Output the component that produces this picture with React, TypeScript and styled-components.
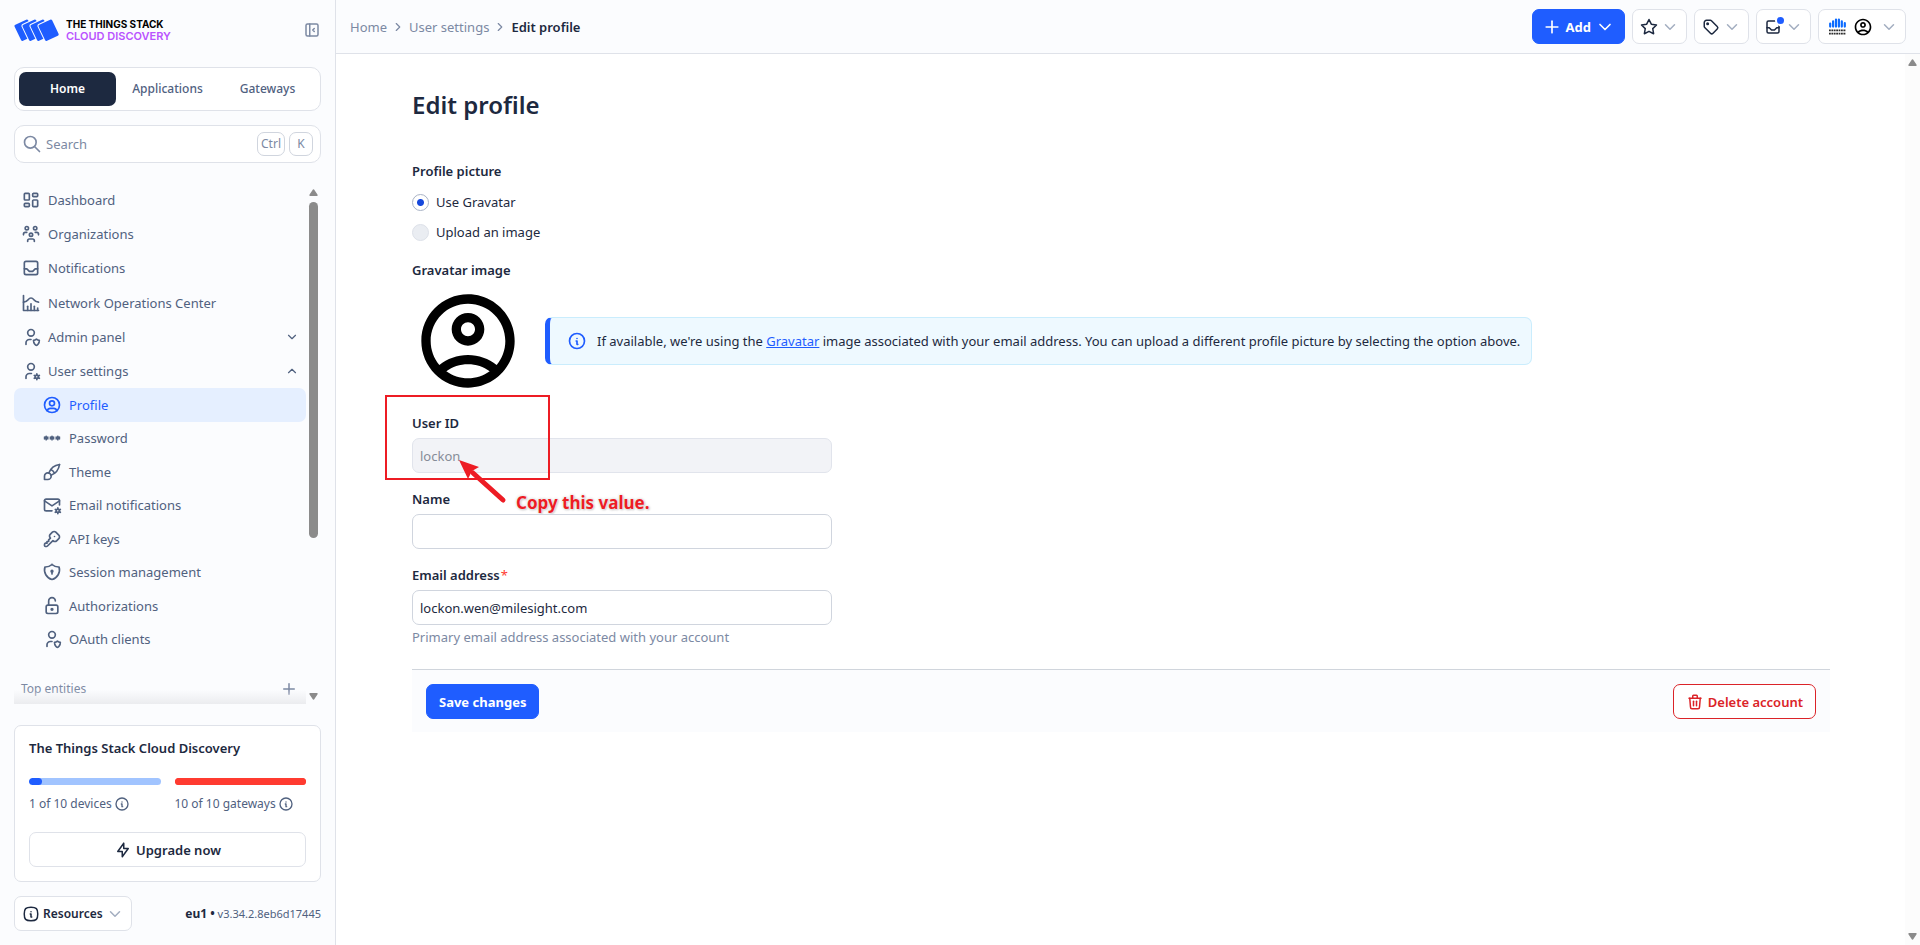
import React from 'react';
import styled, { createGlobalStyle, css } from 'styled-components';
import {
  TbBolt, TbBrush, TbChartHistogram, TbChevronDown, TbChevronRight, TbChevronUp, TbInbox,
  TbInfoCircle, TbInfoSquareRounded, TbKey, TbLayoutDashboard, TbLayoutSidebarLeftCollapse,
  TbLockOpen, TbMailCog, TbPassword, TbPlus, TbSearch, TbShieldLock, TbStar, TbTag, TbTrash,
  TbUserCircle, TbUserCog, TbUserShield, TbUsersGroup,
} from 'react-icons/tb';

const color = {
  text: '#1d2940',
  muted: '#50617f',
  light: '#7c89a3',
  faint: '#a3aec0',
  border: '#dfe2e9',
  field: '#d0d5de',
  surface: '#fbfcfe',
  blue: '#1f5dff',
  red: '#db2328',
  mark: '#ed1c24',
};

const GlobalStyle = createGlobalStyle`
  *, *::before, *::after { box-sizing: border-box; }
  body {
    margin: 0;
    background: #fff;
    color: ${color.text};
    font: 400 13px/20px "Noto Sans", "Open Sans", sans-serif;
  }
  button, input { font: inherit; color: inherit; margin: 0; }
  button { cursor: pointer; }
  a { color: inherit; text-decoration: none; }
  svg { display: block; flex: none; }
`;

const Shell = styled.div`
  display: flex;
  height: 100vh;
  min-height: 900px;
`;

/* ---------- Sidebar ---------- */

const Sidebar = styled.aside`
  display: flex;
  flex-direction: column;
  flex: none;
  width: 336px;
  padding: 14px;
  background: ${color.surface};
  border-right: 1px solid ${color.border};
`;

const BrandRow = styled.div`
  display: flex;
  align-items: center;
  justify-content: space-between;
  height: 32px;
  margin-bottom: 21px;
`;

const Brand = styled.a`
  display: flex;
  align-items: center;
  gap: 6px;
`;

const BrandText = styled.span`
  display: flex;
  flex-direction: column;
  font: 700 10px/12px Inter, sans-serif;
  color: #000;
`;

const BrandPlan = styled.span`
  font-size: 11px;
  font-weight: 600;
  color: #b953ff;
`;

const IconButton = styled.button`
  display: flex;
  padding: 0;
  border: 0;
  background: none;
  color: ${color.light};
`;

const Switcher = styled.nav`
  display: grid;
  grid-template-columns: repeat(3, 1fr);
  gap: 3px;
  height: 44px;
  padding: 4px;
  margin-bottom: 14px;
  background: #fff;
  border: 1px solid ${color.border};
  border-radius: 10px;
`;

const SwitcherTab = styled.a<{ $active?: boolean }>`
  display: flex;
  align-items: center;
  justify-content: center;
  border-radius: 7px;
  font-size: 12px;
  font-weight: ${(p) => (p.$active ? 600 : 500)};
  color: ${(p) => (p.$active ? '#fff' : color.muted)};
  background: ${(p) => (p.$active ? color.text : 'transparent')};
`;

const SearchButton = styled.button`
  display: flex;
  align-items: center;
  gap: 4px;
  height: 38px;
  padding: 0 7px;
  margin-bottom: 20px;
  background: #fff;
  border: 1px solid ${color.border};
  border-radius: 10px;
  color: ${color.light};
`;

const SearchLabel = styled.span`
  flex: 1;
  text-align: left;
`;

const Key = styled.kbd`
  display: flex;
  align-items: center;
  justify-content: center;
  min-width: 24px;
  height: 24px;
  padding: 0 3px;
  border: 1px solid ${color.field};
  border-radius: 7px;
  font: inherit;
  font-size: 12px;
`;

const NavScroll = styled.div`
  display: flex;
  flex: 1;
  min-height: 0;
  margin-bottom: 21px;
`;

const NavPane = styled.div`
  position: relative;
  flex: 1;
  overflow: hidden;
  &::after {
    content: '';
    position: absolute;
    inset: auto 0 0;
    height: 14px;
    background: linear-gradient(rgba(235, 236, 239, 0), #ebecef);
  }
`;

const NavList = styled.div<{ $height: number }>`
  display: grid;
  grid-auto-rows: 1fr;
  min-height: ${(p) => p.$height}px;
`;

const navItem = css`
  display: flex;
  align-items: center;
  gap: 7px;
  border: 0;
  border-radius: 7px;
  text-align: left;
`;

const NavLink = styled.a<{ $active?: boolean; $nested?: boolean }>`
  ${navItem}
  padding: 0 7px 0 ${(p) => (p.$nested ? 28 : 7)}px;
  color: ${(p) => (p.$active ? color.blue : color.muted)};
  background: ${(p) => (p.$active ? '#e5efff' : 'transparent')};
`;

const NavToggle = styled.button`
  ${navItem}
  padding: 0 7px;
  background: none;
  color: ${color.muted};
`;

const Grow = styled.span`
  flex: 1;
`;

const EntitiesHead = styled.div`
  display: flex;
  align-items: center;
  justify-content: space-between;
  padding: 0 8px 0 7px;
  margin-top: 23px;
  font-size: 12px;
  color: ${color.light};
`;

const NavTrack = styled.div`
  display: flex;
  flex-direction: column;
  align-items: center;
  justify-content: space-between;
  width: 15px;
  padding: 6px 0 4px;
`;

const NavThumb = styled.div`
  flex: 1;
  width: 9px;
  max-height: 336px;
  margin: 6px 0 auto;
  border-radius: 5px;
  background: #8b8b8b;
`;

const Card = styled.section`
  padding: 14px;
  margin-bottom: 14px;
  background: #fff;
  border: 1px solid ${color.border};
  border-radius: 7px;
`;

const CardTitle = styled.h2`
  margin: 0 0 21px;
  font-size: 13px;
  line-height: 17px;
  font-weight: 600;
`;

const Quotas = styled.div`
  display: grid;
  grid-template-columns: 1fr 1fr;
  gap: 14px;
  margin-bottom: 18px;
`;

const QuotaBar = styled.div<{ $full?: boolean }>`
  height: 7px;
  margin-bottom: 9px;
  border-radius: 4px;
  overflow: hidden;
  background: ${(p) => (p.$full ? '#ff3b30' : '#a1c4ff')};
`;

const QuotaFill = styled.div<{ $full?: boolean }>`
  height: 100%;
  border-radius: 4px;
  background: ${(p) => (p.$full ? '#ff3b30' : color.blue)};
`;

const QuotaLabel = styled.div`
  display: flex;
  align-items: center;
  gap: 2px;
  font-size: 12px;
  color: ${color.muted};
`;

const Footer = styled.footer`
  display: flex;
  align-items: center;
  justify-content: space-between;
  font-size: 12px;
  color: ${color.muted};
`;

const Version = styled.span`
  font-size: 11px;
`;

const Strong = styled.strong`
  font-size: 12px;
  color: ${color.text};
`;

/* ---------- Shared buttons ---------- */

const Button = styled.button<{ $kind?: 'primary' | 'danger'; $wide?: boolean }>`
  display: flex;
  align-items: center;
  justify-content: center;
  gap: 4px;
  height: 35px;
  width: ${(p) => (p.$wide ? '100%' : 'auto')};
  padding: 0 12px;
  border-radius: 7px;
  border: 1px solid ${(p) => (p.$kind === 'primary' ? color.blue : p.$kind === 'danger' ? color.red : color.border)};
  background: ${(p) => (p.$kind === 'primary' ? color.blue : '#fff')};
  color: ${(p) => (p.$kind === 'primary' ? '#fff' : p.$kind === 'danger' ? color.red : color.text)};
  font-weight: 600;
`;

const SaveButton = styled(Button)`
  font-weight: 700;
`;

const AddButton = styled(Button)`
  padding: 0 9px;
  font-weight: 700;
`;

const ResourcesButton = styled(Button)`
  gap: 3px;
  padding: 0 7px;
  font-size: 12px;
`;

const Chevron = styled(TbChevronDown)`
  color: ${color.faint};
`;

/* ---------- Main column ---------- */

const Column = styled.div`
  display: flex;
  flex-direction: column;
  flex: 1;
  min-width: 0;
`;

const TopBar = styled.header`
  display: flex;
  align-items: center;
  justify-content: space-between;
  height: 54px;
  padding: 0 14px;
  background: ${color.surface};
  border-bottom: 1px solid ${color.border};
`;

const Crumbs = styled.nav`
  display: flex;
  align-items: center;
  gap: 4px;
  color: ${color.light};
`;

const CurrentCrumb = styled.span`
  font-weight: 600;
  color: ${color.text};
`;

const Actions = styled.div`
  display: flex;
  gap: 7px;
`;

const MenuButton = styled(Button)`
  gap: 3px;
  padding: 0 7px;
`;

const UserButton = styled(MenuButton)`
  gap: 7px;
  padding: 0 7px 0 10px;
`;

const InboxBadge = styled.span`
  position: relative;
  &::after {
    content: '';
    position: absolute;
    top: -1px;
    right: -2px;
    width: 7px;
    height: 7px;
    border-radius: 50%;
    background: ${color.blue};
    box-shadow: 0 0 0 2px #fff;
  }
`;

const Body = styled.div`
  display: flex;
  flex: 1;
  min-height: 0;
`;

const Content = styled.main`
  flex: 1;
  min-width: 0;
  padding: 33px 75px 0 76px;
`;

const PageTrack = styled.div`
  display: flex;
  flex-direction: column;
  align-items: center;
  justify-content: space-between;
  width: 15px;
  padding: 5px 0;
  background: #fcfcfc;
`;

const Title = styled.h1`
  margin: 0 0 38px;
  font-size: 24px;
  line-height: 36px;
  font-weight: 600;
`;

const Group = styled.fieldset`
  display: flex;
  flex-direction: column;
  gap: 10px;
  margin: 0 0 18px;
  padding: 0;
  border: 0;
`;

const labelText = css`
  display: block;
  padding: 0;
  font-weight: 600;
`;

const Legend = styled.legend`
  ${labelText}
  margin-bottom: 11px;
`;

const RadioLabel = styled.label`
  display: flex;
  align-items: center;
  gap: 7px;
`;

const Radio = styled.input`
  appearance: none;
  width: 17px;
  height: 17px;
  border: 1px solid #a9b3c6;
  border-radius: 50%;
  background: #fff;
  &:checked {
    background: radial-gradient(circle, #1648dc 0 3px, #fff 4px);
  }
  &:disabled {
    background: #eaedf2;
    border-color: #dde1e9;
  }
`;

const Caption = styled.div`
  ${labelText}
`;

const GravatarRow = styled.div`
  display: flex;
  align-items: center;
  gap: 21px;
  margin: 5px 0 16px;
`;

const Portrait = styled.span`
  color: #000;
`;

const Notice = styled.div`
  display: flex;
  align-items: center;
  gap: 10px;
  min-height: 48px;
  padding: 0 11px 0 17px;
  border: 1px solid #caedfd;
  border-left: 5px solid ${color.blue};
  border-radius: 7px;
  background: #eef9ff;
`;

const NoticeIcon = styled(TbInfoCircle)`
  color: ${color.blue};
`;

const TextLink = styled.a`
  color: ${color.blue};
  text-decoration: underline;
`;

const Field = styled.div`
  position: relative;
  max-width: 420px;
  margin-bottom: 16px;
`;

const Label = styled.label`
  ${labelText}
  margin-bottom: 5px;
`;

const Required = styled.span`
  margin-left: 1px;
  font-weight: 400;
  color: #ff3b30;
`;

const Input = styled.input`
  display: block;
  width: 100%;
  height: 35px;
  padding: 0 7px;
  border: 1px solid ${color.field};
  border-radius: 7px;
  background: #fff;
  outline: 0;
  &:disabled {
    background: #f2f3f7;
    border-color: #e1e4ec;
    color: #868c98;
  }
`;

const Hint = styled.p`
  margin: 2px 0 22px;
  color: ${color.light};
`;

const FormActions = styled.div`
  display: flex;
  justify-content: space-between;
  padding: 14px 14px 13px;
  border-top: 1px solid #d0d5dc;
  background: ${color.surface};
`;

/* ---------- Annotation over the user ID field ---------- */

const MarkBox = styled.div`
  position: absolute;
  top: -18px;
  left: -27px;
  width: 165px;
  height: 85px;
  border: 2px solid ${color.mark};
  pointer-events: none;
`;

const MarkArrow = styled.svg`
  position: absolute;
  top: 45px;
  left: 45px;
`;

const MarkText = styled.div`
  position: absolute;
  top: 78px;
  left: 104px;
  font-size: 17px;
  line-height: 24px;
  font-weight: 700;
  white-space: nowrap;
  color: ${color.mark};
  text-shadow: 0 0 2px #fff, 0 0 3px #bbb, 1px 1px 2px #ccc;
`;

/* ---------- Drawings ---------- */

const BrandMark = () => (
  <svg width="46" height="23" viewBox="0 0 46 23" aria-hidden="true">
    {[0, 8, 16, 24].map((x) => (
      <g key={x} transform={`translate(${x} 0)`} strokeLinejoin="round">
        <path d="M2 7 12.8 2 19.2 15.4 8.4 20.4Z" fill={color.surface} stroke={color.surface} strokeWidth="5" />
        <path d="M2 7 12.8 2 19.2 15.4 8.4 20.4Z" fill={color.blue} stroke={color.blue} strokeWidth="3" />
      </g>
    ))}
  </svg>
);

const AccountIcon = ({ size }: { size: number }) => (
  <svg width={size} height={size} viewBox="0 0 24 24" fill="currentColor" aria-hidden="true">
    <path d="M12 2C6.48 2 2 6.48 2 12s4.48 10 10 10 10-4.48 10-10S17.52 2 12 2zM7.35 18.5C8.66 17.56 10.26 17 12 17s3.34.56 4.65 1.5C15.34 19.44 13.74 20 12 20s-3.34-.56-4.65-1.5zm10.79-1.38C16.45 15.8 14.32 15 12 15s-4.45.8-6.14 2.12C4.7 15.73 4 13.95 4 12c0-4.42 3.58-8 8-8s8 3.58 8 8c0 1.95-.7 3.73-1.86 5.12z" />
    <path d="M12 6c-1.93 0-3.5 1.57-3.5 3.5S10.07 13 12 13s3.5-1.57 3.5-3.5S13.93 6 12 6zm0 5c-.83 0-1.5-.67-1.5-1.5S11.17 8 12 8s1.5.67 1.5 1.5S12.83 11 12 11z" />
  </svg>
);

const TenantMark = () => (
  <svg width="17" height="17" viewBox="0 0 17 17" aria-hidden="true">
    <path d="M1.2 5.6v3M4.1 3.4v5.2M7 1.6v7M9.9 1.6v7M12.8 3.4v5.2M15.8 5.2v3.4" stroke="#0c6bff" strokeWidth="2.2" strokeLinecap="round" />
    <path d="M0 12.4h17M0 15.6h17" stroke="#2c2c2c" strokeWidth="1.8" strokeDasharray="1.8 .6" />
  </svg>
);

const Arrow = ({ down }: { down?: boolean }) => (
  <svg width="9" height="7" viewBox="0 0 9 7" aria-hidden="true">
    <path d={down ? 'M1 .8h7L4.5 6Z' : 'M1 6.2h7L4.5 1Z'} fill="#8b8b8b" stroke="#8b8b8b" strokeWidth="1.4" strokeLinejoin="round" />
  </svg>
);

const mainLinks = [
  { label: 'Dashboard', Icon: TbLayoutDashboard },
  { label: 'Organizations', Icon: TbUsersGroup },
  { label: 'Notifications', Icon: TbInbox },
  { label: 'Network Operations Center', Icon: TbChartHistogram },
];

const settingsLinks = [
  { label: 'Profile', Icon: TbUserCircle, active: true },
  { label: 'Password', Icon: TbPassword },
  { label: 'Theme', Icon: TbBrush },
  { label: 'Email notifications', Icon: TbMailCog },
  { label: 'API keys', Icon: TbKey },
  { label: 'Session management', Icon: TbShieldLock },
  { label: 'Authorizations', Icon: TbLockOpen },
  { label: 'OAuth clients', Icon: TbUserShield },
];

const Quota = ({ used, total, unit }: { used: number; total: number; unit: string }) => {
  const full = used >= total;
  return (
    <div>
      <QuotaBar $full={full} role="progressbar" aria-label={unit} aria-valuenow={used} aria-valuemax={total}>
        <QuotaFill $full={full} style={{ width: `${(used / total) * 100}%` }} />
      </QuotaBar>
      <QuotaLabel>
        {`${used} of ${total} ${unit}`}
        <TbInfoCircle size={16} />
      </QuotaLabel>
    </div>
  );
};

export default function App() {
  return (
    <>
      <GlobalStyle />
      <Shell>
        <Sidebar>
          <BrandRow>
            <Brand href="#">
              <BrandMark />
              <BrandText>
                THE THINGS STACK
                <BrandPlan>CLOUD DISCOVERY</BrandPlan>
              </BrandText>
            </Brand>
            <IconButton aria-label="Collapse sidebar"><TbLayoutSidebarLeftCollapse size={18} /></IconButton>
          </BrandRow>
          <Switcher>
            <SwitcherTab href="#" $active>Home</SwitcherTab>
            <SwitcherTab href="#">Applications</SwitcherTab>
            <SwitcherTab href="#">Gateways</SwitcherTab>
          </Switcher>
          <SearchButton>
            <TbSearch size={20} />
            <SearchLabel>Search</SearchLabel>
            <Key>Ctrl</Key>
            <Key>K</Key>
          </SearchButton>
          <NavScroll>
            <NavPane>
              <NavList $height={205}>
                {mainLinks.map(({ label, Icon }) => (
                  <NavLink href="#" key={label}><Icon size={20} />{label}</NavLink>
                ))}
                <NavToggle aria-expanded={false}>
                  <TbUserShield size={20} /><Grow>Admin panel</Grow><TbChevronDown size={14} />
                </NavToggle>
                <NavToggle aria-expanded>
                  <TbUserCog size={20} /><Grow>User settings</Grow><TbChevronUp size={14} />
                </NavToggle>
              </NavList>
              <NavList $height={268}>
                {settingsLinks.map(({ label, Icon, active }) => (
                  <NavLink href="#" key={label} $nested $active={active}><Icon size={20} />{label}</NavLink>
                ))}
              </NavList>
              <EntitiesHead>
                Top entities
                <IconButton aria-label="Add entity"><TbPlus size={18} /></IconButton>
              </EntitiesHead>
            </NavPane>
            <NavTrack>
              <Arrow />
              <NavThumb />
              <Arrow down />
            </NavTrack>
          </NavScroll>
          <Card>
            <CardTitle>The Things Stack Cloud Discovery</CardTitle>
            <Quotas>
              <Quota used={1} total={10} unit="devices" />
              <Quota used={10} total={10} unit="gateways" />
            </Quotas>
            <Button $wide><TbBolt size={18} />Upgrade now</Button>
          </Card>
          <Footer>
            <ResourcesButton><TbInfoSquareRounded size={18} />Resources<Chevron size={18} /></ResourcesButton>
            <Version><Strong>eu1 •</Strong> v3.34.2.8eb6d17445</Version>
          </Footer>
        </Sidebar>

        <Column>
          <TopBar>
            <Crumbs aria-label="Breadcrumb">
              <a href="#">Home</a>
              <TbChevronRight size={14} />
              <a href="#">User settings</a>
              <TbChevronRight size={14} />
              <CurrentCrumb>Edit profile</CurrentCrumb>
            </Crumbs>
            <Actions>
              <AddButton $kind="primary"><TbPlus size={20} />Add<TbChevronDown size={20} /></AddButton>
              <MenuButton aria-label="Bookmarks"><TbStar size={18} /><Chevron size={18} /></MenuButton>
              <MenuButton aria-label="Tags"><TbTag size={18} /><Chevron size={18} /></MenuButton>
              <MenuButton aria-label="Inbox"><InboxBadge><TbInbox size={18} /></InboxBadge><Chevron size={18} /></MenuButton>
              <UserButton aria-label="Account">
                <TenantMark /><Portrait><AccountIcon size={20} /></Portrait><Chevron size={18} />
              </UserButton>
            </Actions>
          </TopBar>
          <Body>
            <Content>
              <Title>Edit profile</Title>
              <form onSubmit={(e) => e.preventDefault()}>
                <Group>
                  <Legend>Profile picture</Legend>
                  <RadioLabel><Radio type="radio" name="picture" defaultChecked />Use Gravatar</RadioLabel>
                  <RadioLabel><Radio type="radio" name="picture" disabled />Upload an image</RadioLabel>
                </Group>
                <Caption>Gravatar image</Caption>
                <GravatarRow>
                  <Portrait><AccountIcon size={112} /></Portrait>
                  <Notice>
                    <NoticeIcon size={20} />
                    <span>
                      If available, we're using the <TextLink href="#">Gravatar</TextLink> image associated with your
                      email address. You can upload a different profile picture by selecting the option above.
                    </span>
                  </Notice>
                </GravatarRow>
                <Field>
                  <Label htmlFor="user-id">User ID</Label>
                  <Input id="user-id" defaultValue="lockon" disabled />
                  <MarkBox />
                  <MarkArrow width="52" height="48" viewBox="0 0 52 48" aria-hidden="true">
                    <path d="M16 15 46 42" stroke={color.mark} strokeWidth="5" strokeLinecap="round" />
                    <path d="M2 2 22 9 15 13 11 21Z" fill={color.mark} />
                  </MarkArrow>
                  <MarkText>Copy this value.</MarkText>
                </Field>
                <Field>
                  <Label htmlFor="name">Name</Label>
                  <Input id="name" />
                </Field>
                <Field>
                  <Label htmlFor="email">Email address<Required>*</Required></Label>
                  <Input id="email" type="email" defaultValue="lockon.wen@milesight.com" required />
                  <Hint>Primary email address associated with your account</Hint>
                </Field>
                <FormActions>
                  <SaveButton $kind="primary" type="submit">Save changes</SaveButton>
                  <Button $kind="danger" type="button"><TbTrash size={18} />Delete account</Button>
                </FormActions>
              </form>
            </Content>
            <PageTrack>
              <Arrow />
              <Arrow down />
            </PageTrack>
          </Body>
        </Column>
      </Shell>
    </>
  );
}
